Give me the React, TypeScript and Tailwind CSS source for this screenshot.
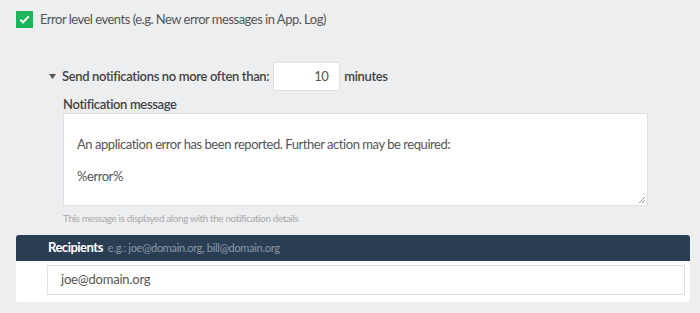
import React from "react";

export default function App() {
  const font = { fontFamily: "Lato, 'Noto Sans', sans-serif" };
  return (
    <div className="w-[700px] h-[313px] bg-[#edeef0] text-[#555] overflow-hidden tracking-[-0.5px]" style={font}>
      <div className="pt-[11px] pl-[16px] flex items-center gap-[7px] h-[28px]">
        <span className="w-[17px] h-[17px] bg-[#1db55a] flex items-center justify-center">
          <svg width="11" height="9" viewBox="0 0 11 9">
            <path d="M1.2 4.6 L4 7.3 L9.8 1.4" fill="none" stroke="white" strokeWidth="2" />
          </svg>
        </span>
        <span className="text-[13px] leading-[17px]">Error level events (e.g. New error messages in App. Log)</span>
      </div>

      <div className="mt-[34px] pl-[49px] flex items-center h-[29px]">
        <svg width="7" height="5" viewBox="0 0 7 5" className="mr-[6px]">
          <path d="M0 0 H7 L3.5 5 Z" fill="#555" />
        </svg>
        <span className="text-[13px] font-semibold tracking-[-0.35px] text-[#444]">Send notifications no more often than:</span>
        <div className="ml-[4px] w-[67px] h-[29px] bg-white border border-[#dfe1e4] flex items-center justify-end pr-[11px] text-[13px] text-[#555]">10</div>
        <span className="ml-[4px] text-[13px] font-semibold tracking-[-0.35px] text-[#444]">minutes</span>
      </div>

      <div className="pl-[63px] mt-[4px]">
        <div className="text-[13px] font-semibold tracking-[-0.35px] text-[#444] leading-[18px]">Notification message</div>
        <div className="relative w-[585px] h-[93px] bg-white border border-[#dfe1e4] pl-[13px] pt-[22px] text-[13px] tracking-[-0.45px] text-[#555] leading-[17px]">
          <div>An application error has been reported. Further action may be required:</div>
          <div className="mt-[15px]">%error%</div>
          <svg width="8" height="8" viewBox="0 0 8 8" className="absolute right-[1px] bottom-[1px]">
            <path d="M7 1 L1 7 M7 4 L4 7" stroke="#999" strokeWidth="1" />
          </svg>
        </div>
        <div className="mt-[5px] text-[10px] tracking-[-0.4px] text-[#aaa] leading-[14px]">This message is displayed along with the notification details</div>
      </div>

      <div className="mt-[10px] ml-[16px] w-[674px]">
        <div className="h-[26px] bg-[#2a3e53] rounded-t-[3px] flex items-center pl-[32px] gap-[5px]">
          <span className="text-[13px] font-bold text-white">Recipients</span>
          <span className="text-[11px] tracking-[-0.3px] text-[#8b98a6]">e.g.: joe@domain.org, bill@domain.org</span>
        </div>
        <div className="h-[41px] bg-white rounded-b-[3px] pl-[31px] pr-[5px] pt-[4px]">
          <div className="h-[30px] border border-[#dfe1e4] flex items-center pl-[13px] text-[13px] tracking-[-0.2px] text-[#555]">joe@domain.org</div>
        </div>
      </div>
    </div>
  );
}
